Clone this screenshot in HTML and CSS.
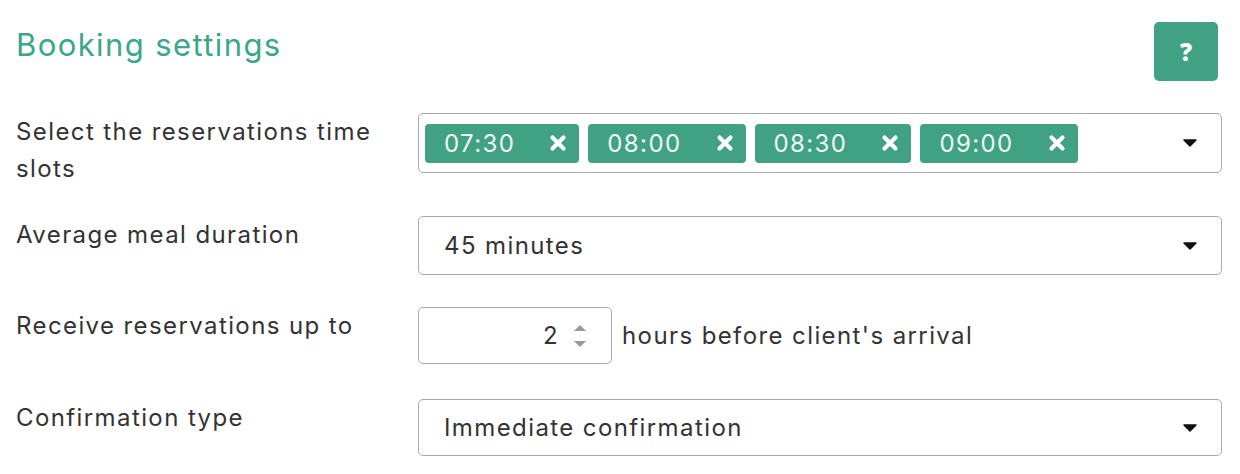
FILE: index.html
```html
<!DOCTYPE html>
<html lang="en">
<head>
<meta charset="utf-8">
<title>Booking settings</title>
<link rel="stylesheet" href="styles.css">
</head>
<body>
<div class="page">
  <div class="header">
    <h1 class="title">Booking settings</h1>
    <button class="help-btn" type="button">?</button>
  </div>

  <div class="row row-slots">
    <div class="label">Select the reservations time<br>slots</div>
    <div class="select select-multi">
      <div class="tags">
        <span class="tag">07:30<span class="tag-x"><svg viewBox="0 0 18 18" width="18" height="18"><path d="M3.5 3.5 L14.5 14.5 M14.5 3.5 L3.5 14.5" stroke="#fff" stroke-width="4.2" stroke-linecap="round"/></svg></span></span>
        <span class="tag">08:00<span class="tag-x"><svg viewBox="0 0 18 18" width="18" height="18"><path d="M3.5 3.5 L14.5 14.5 M14.5 3.5 L3.5 14.5" stroke="#fff" stroke-width="4.2" stroke-linecap="round"/></svg></span></span>
        <span class="tag">08:30<span class="tag-x"><svg viewBox="0 0 18 18" width="18" height="18"><path d="M3.5 3.5 L14.5 14.5 M14.5 3.5 L3.5 14.5" stroke="#fff" stroke-width="4.2" stroke-linecap="round"/></svg></span></span>
        <span class="tag">09:00<span class="tag-x"><svg viewBox="0 0 18 18" width="18" height="18"><path d="M3.5 3.5 L14.5 14.5 M14.5 3.5 L3.5 14.5" stroke="#fff" stroke-width="4.2" stroke-linecap="round"/></svg></span></span>
      </div>
      <span class="caret"><svg viewBox="0 0 14 8" width="14" height="8"><path d="M1 1 H13 L7 7 Z" fill="#111" stroke="#111" stroke-width="1.5" stroke-linejoin="round"/></svg></span>
    </div>
  </div>

  <div class="row row-duration">
    <div class="label">Average meal duration</div>
    <div class="select select-single">
      <span class="select-text">45 minutes</span>
      <span class="caret"><svg viewBox="0 0 14 8" width="14" height="8"><path d="M1 1 H13 L7 7 Z" fill="#111" stroke="#111" stroke-width="1.5" stroke-linejoin="round"/></svg></span>
    </div>
  </div>

  <div class="row row-hours">
    <div class="label">Receive reservations up to</div>
    <div class="inline-field">
      <div class="number-input">
        <span class="number-value">2</span>
        <span class="spinner">
          <svg viewBox="0 0 14 8" width="14" height="8"><path d="M1 7 H13 L7 1 Z" fill="#999"/></svg>
          <svg viewBox="0 0 14 8" width="14" height="8"><path d="M1 1 H13 L7 7 Z" fill="#999"/></svg>
        </span>
      </div>
      <span class="suffix">hours before client's arrival</span>
    </div>
  </div>

  <div class="row row-confirm">
    <div class="label">Confirmation type</div>
    <div class="select select-single select-short">
      <span class="select-text">Immediate confirmation</span>
      <span class="caret"><svg viewBox="0 0 14 8" width="14" height="8"><path d="M1 1 H13 L7 7 Z" fill="#111" stroke="#111" stroke-width="1.5" stroke-linejoin="round"/></svg></span>
    </div>
  </div>
</div>
</body>
</html>
```

FILE: styles.css
```css
* { box-sizing: border-box; }

html, body {
  margin: 0;
  padding: 0;
  background: #ffffff;
}

body {
  font-family: "Inter", "Noto Sans", "Liberation Sans", sans-serif;
  color: #333333;
  font-size: 24px;
  letter-spacing: 1.4px;
}

.page {
  width: 1240px;
  padding: 22px 22px 0 16px;
}

.header {
  display: flex;
  justify-content: space-between;
  align-items: flex-start;
  height: 59px;
  margin-bottom: 32px;
}

.title {
  margin: 3px 0 0 0;
  font-size: 31px;
  font-weight: 400;
  line-height: 40px;
  letter-spacing: 1.4px;
  color: #3aa68a;
}

.help-btn {
  width: 64px;
  height: 59px;
  border: none;
  border-radius: 5px;
  background: #41a283;
  color: #ffffff;
  font-family: "Open Sans", "Liberation Sans", sans-serif;
  font-weight: 800;
  font-size: 24px;
  letter-spacing: 0;
  padding: 0;
  display: flex;
  align-items: center;
  justify-content: center;
}

.row {
  display: grid;
  grid-template-columns: 402px 804px;
  align-items: start;
}

.row-slots { margin-bottom: 29px; }
.row-duration { margin-bottom: 32px; }
.row-hours { margin-bottom: 35px; }

.label {
  line-height: 37px;
  color: #333333;
}

.select {
  display: flex;
  align-items: center;
  justify-content: space-between;
  border: 1px solid #a9a9a9;
  border-radius: 5px;
  background: #ffffff;
}

.select-multi {
  height: 60px;
  padding: 0 24px 0 6px;
}

.select-single {
  height: 59px;
  padding: 0 24px 0 25px;
}

.select-short { height: 57px; }

.select-text {
  color: #333333;
}

.tags {
  display: flex;
  gap: 9px;
}

.tag {
  display: flex;
  align-items: center;
  height: 39px;
  padding: 0 12px 0 19px;
  border-radius: 4px;
  background: #41a283;
  color: #eef7f3;
}

.tag-x {
  display: flex;
  margin-left: 34px;
}

.caret {
  display: flex;
  align-items: center;
}

.inline-field {
  display: flex;
  align-items: center;
  gap: 10px;
}

.number-input {
  width: 194px;
  height: 57px;
  border: 1px solid #a9a9a9;
  border-radius: 5px;
  display: flex;
  align-items: center;
  justify-content: flex-end;
  padding-right: 24px;
  gap: 14px;
}

.number-value {
  color: #333333;
}

.spinner {
  display: flex;
  flex-direction: column;
  gap: 8px;
}

.suffix {
  color: #333333;
}
```
